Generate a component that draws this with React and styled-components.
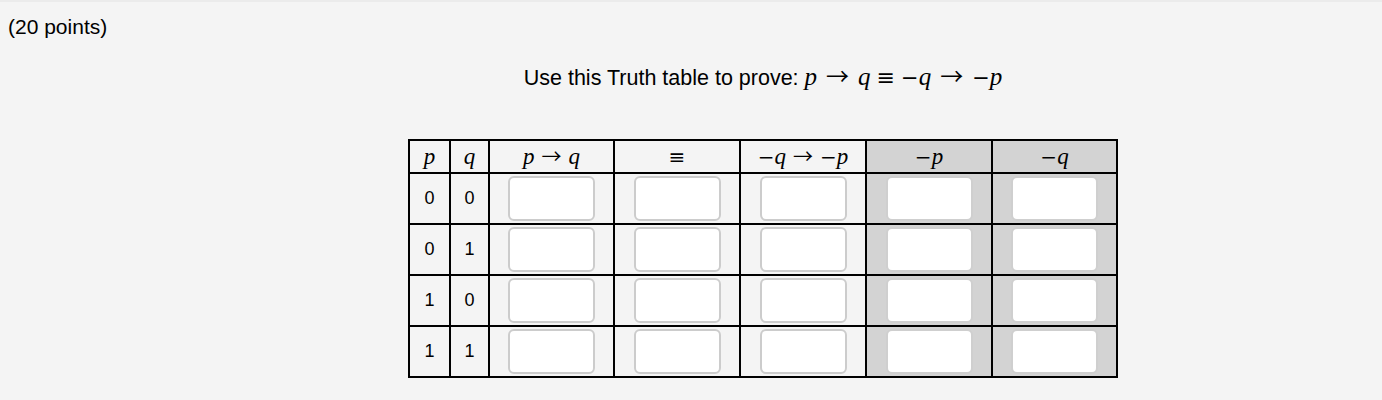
import styled, { createGlobalStyle } from "styled-components";

const GlobalStyle = createGlobalStyle`
  html, body {
    margin: 0;
    background: #f4f4f4;
  }
  body {
    font-family: "Liberation Sans", Arial, sans-serif;
    color: #000;
  }
`;

const Page = styled.div`
  border-top: 2px solid #ebebeb;
  min-height: 398px;
`;

const Points = styled.div`
  padding: 13px 0 0 8px;
  font-size: 21px;
  line-height: 24px;
`;

const Body = styled.div`
  padding-left: 144px;
  display: flex;
  flex-direction: column;
  align-items: center;
`;

const Prompt = styled.div`
  margin-top: 25px;
  height: 26px;
  font-size: 21.5px;
  line-height: 26px;
  white-space: nowrap;
`;

const Math = styled.span`
  font-family: "Liberation Serif", "DejaVu Serif", serif;
  font-style: italic;
  font-size: 25px;
  line-height: 1;
`;

const Op = styled.span`
  font-family: "DejaVu Sans", sans-serif;
  font-style: normal;
  font-size: ${(p) => p.$size || "22px"};
  line-height: 1;
  margin: 0 ${(p) => p.$gap || "4px"};
`;

const Arrow = styled.span`
  font-family: "Noto Sans CJK SC", "DejaVu Sans", sans-serif;
  font-style: normal;
  font-size: ${(p) => p.$size || "22px"};
  line-height: 1;
  margin: 0 ${(p) => p.$gap || "6px"};
`;

const Table = styled.table`
  margin-top: 49px;
  border-collapse: collapse;
  border: 2px solid #000;
`;

const Head = styled.th`
  border: 2px solid #000;
  height: 31px;
  padding: 0;
  width: ${(p) => p.$w}px;
  background: ${(p) => (p.$shade ? "#d3d3d3" : "transparent")};
  font-weight: normal;
  font-family: "Liberation Serif", serif;
  font-style: italic;
  font-size: 23px;
  line-height: 26px;
  text-align: center;
  vertical-align: middle;
`;

const Cell = styled.td`
  border: 2px solid #000;
  height: 49px;
  padding: 0;
  background: ${(p) => (p.$shade ? "#d3d3d3" : "transparent")};
  font-size: 18px;
  text-align: center;
  vertical-align: middle;
`;

const Answer = styled.input`
  display: block;
  margin: 0 auto;
  box-sizing: border-box;
  width: 87px;
  height: 45px;
  border: 2px solid ${(p) => (p.$shade ? "#cfcfcf" : "#cccccc")};
  border-radius: 6px;
  background: #fff;
  outline: none;
`;

const Minus = () => <Op $gap="0" $size="20px">−</Op>;
const HeadArrow = () => <Arrow $gap="7px" $size="20px">→</Arrow>;

const columns = [
  { key: "pq", w: 123, label: <><span>p</span><HeadArrow /><span>q</span></> },
  { key: "eq", w: 124, label: <Op $gap="0" $size="20px">≡</Op> },
  {
    key: "contra",
    w: 124,
    label: <><Minus /><span>q</span><HeadArrow /><Minus /><span>p</span></>,
  },
  { key: "np", w: 124, shade: true, label: <><Minus /><span>p</span></> },
  { key: "nq", w: 123, shade: true, label: <><Minus /><span>q</span></> },
];

const rows = [
  [0, 0],
  [0, 1],
  [1, 0],
  [1, 1],
];

export default function App() {
  return (
    <>
      <GlobalStyle />
      <Page>
        <Points>(20 points)</Points>
        <Body>
          <Prompt>
            Use this Truth table to prove:{" "}
            <Math>p</Math>
            <Arrow $gap="9px" $size="23px">→</Arrow>
            <Math>q</Math>
            <Op $gap="6px" $size="22px">≡</Op>
            <Op $gap="0" $size="21px">−</Op>
            <Math>q</Math>
            <Arrow $gap="9px" $size="23px">→</Arrow>
            <Op $gap="0" $size="21px">−</Op>
            <Math>p</Math>
          </Prompt>
          <Table>
            <thead>
              <tr>
                <Head $w={39}>p</Head>
                <Head $w={37}>q</Head>
                {columns.map((c) => (
                  <Head key={c.key} $w={c.w} $shade={c.shade}>
                    {c.label}
                  </Head>
                ))}
              </tr>
            </thead>
            <tbody>
              {rows.map(([p, q], i) => (
                <tr key={i}>
                  <Cell>{p}</Cell>
                  <Cell>{q}</Cell>
                  {columns.map((c) => (
                    <Cell key={c.key} $shade={c.shade}>
                      <Answer $shade={c.shade} />
                    </Cell>
                  ))}
                </tr>
              ))}
            </tbody>
          </Table>
        </Body>
      </Page>
    </>
  );
}
